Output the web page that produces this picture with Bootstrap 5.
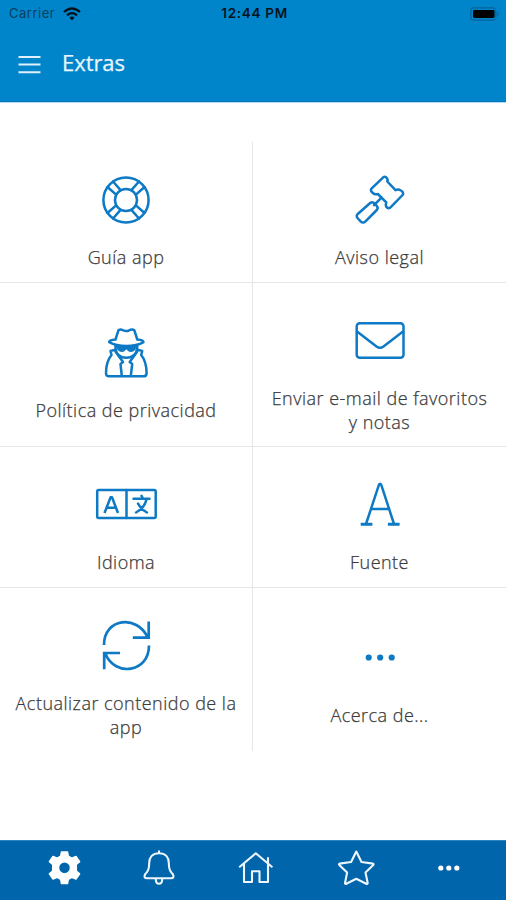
<!DOCTYPE html>
<html lang="es">
<head>
<meta charset="utf-8">
<meta name="viewport" content="width=device-width, initial-scale=1">
<title>Extras</title>
<link href="https://cdn.jsdelivr.net/npm/bootstrap@5.3.0/dist/css/bootstrap.min.css" rel="stylesheet">
<style>
body{font-family:"Open Sans","Noto Sans",sans-serif;height:900px;overflow:hidden;background:#fff}
.topbar{background:#0085ca;height:102px;border-bottom:1px solid #0077bd;box-shadow:0 1px 0 #b9daf2}
.status{height:27px;font-family:Inter,sans-serif;font-size:13px;color:#0a1d2b;padding:0 6px 0 9px}
.status .carrier{color:#0b3f60;letter-spacing:.5px}
.status .clock{font-weight:600;font-size:13.5px;letter-spacing:.7px;color:#04141f}
.heading{height:73px;padding-left:18px;gap:21px}
.heading h1{font-size:22px;color:#e9f5fd;letter-spacing:-.05px;line-height:30px;padding-bottom:3px;-webkit-text-stroke:.25px #e9f5fd}
.tiles{padding-top:40px}
.short-row{height:141px}
.tall-row{height:164px}
.tile{padding:34px 12px 12px;border-bottom:1px solid #e6e6e6;color:#3b3b3b;text-decoration:none}
.tile:first-child{border-right:1px solid #e6e6e6}
.tiles>.row:last-child{height:163px}
.tiles>.row:last-child .tile{border-bottom:0;padding-top:34px}
.tile svg{width:64px;height:48px;overflow:visible;margin-bottom:22px;flex:none}
.tile span{font-size:18px;font-weight:300;line-height:23.5px;letter-spacing:.48px;text-align:center;-webkit-text-stroke:.25px #3b3b3b}
.ico{fill:none;stroke:#0e79c4;stroke-width:2.5;stroke-linejoin:round;stroke-linecap:round}
.tabs{background:#0065aa;height:60px;border-top:1px solid #2d83bd}
.tabs svg{width:506px;height:59px;display:block}
.tabs .line{fill:none;stroke:#eef6fd;stroke-width:2.1;stroke-linejoin:round;stroke-linecap:round}
</style>
<script src="https://cdn.jsdelivr.net/npm/bootstrap@5.3.0/dist/js/bootstrap.bundle.min.js"></script>
</head>
<body class="d-flex flex-column">
<header class="topbar flex-shrink-0">
  <div class="status row g-0 align-items-center">
    <div class="col d-flex align-items-center gap-2"><span class="carrier">Carrier</span>
      <svg width="18" height="14" viewBox="0 0 18 14" fill="none" stroke="#06121b" stroke-width="2.3"><path d="M1 5Q9-2 17 5M4 8.300Q9 4 14 8.300"/><path d="M6.400 10.600Q9 8.300 11.600 10.600L9 13.400Z" fill="#06121b" stroke="none"/></svg>
    </div>
    <div class="col-auto clock">12:44 PM</div>
    <div class="col d-flex justify-content-end">
      <svg width="30" height="14" viewBox="0 0 30 14"><rect x=".8" y=".8" width="25" height="12.4" rx="3.5" fill="none" stroke="#07639a" stroke-width="1.3"/><rect x="3" y="3" width="21.5" height="8" rx="1.4"/><path d="M27.500 4.500Q30 7 27.500 9.500Z" fill="#07639a"/></svg>
    </div>
  </div>
  <div class="heading d-flex align-items-center">
    <svg width="23" height="20" viewBox="0 0 23 20" stroke="#e0f1fc" stroke-width="2"><path d="M.5 3h22M.5 10.500h22M.5 18.200h22"/></svg>
    <h1 class="m-0 fw-normal">Extras</h1>
  </div>
</header>

<main class="tiles flex-grow-1">
  <div class="row g-0 short-row">
    <a class="tile col-6 d-flex flex-column align-items-center justify-content-center">
      <svg class="ico" viewBox="94 176 64 48"><circle cx="126" cy="200" r="22.600"/><circle cx="126" cy="200" r="11"/><path d="M113 181.500l7.400 8.300M107.500 187l8.300 7.400M139 181.500l-7.400 8.300M144.500 187l-8.300 7.400M113 218.500l7.400-8.300M107.500 213l8.300-7.400M139 218.500l-7.400-8.300M144.500 213l-8.300-7.400"/></svg>
      <span>Guía app</span>
    </a>
    <a class="tile col-6 d-flex flex-column align-items-center justify-content-center">
      <svg class="ico" viewBox="348 176 64 48"><path d="M383.2 177.300Q385.300 176 387 178.200Q388 179.500 387.300 181.500L395.500 190.200Q397.500 189.300 399.500 189.800Q404.500 191.800 402.600 195L390.800 207.200Q388.600 209.400 386.200 206.600Q385.300 205 386.300 202.400L377.800 194Q374.800 194.800 372.800 193Q369.800 190.500 371.500 188.600Z"/><path d="M381.500 197.700L374 205.200M370.500 202.800Q372.500 201.500 374.500 203.500L377 206.200Q378.400 208.300 376.800 210L365.500 221.300Q363 223.800 360.600 221.300L357.900 218.500Q355.500 216 358 213.700Z"/></svg>
      <span>Aviso legal</span>
    </a>
  </div>
  <div class="row g-0 tall-row">
    <a class="tile col-6 d-flex flex-column align-items-center justify-content-center">
      <svg class="ico" viewBox="94 328.500 64 48"><path d="M115.500 339L118.500 329.700Q121 328 124 330.200Q126 331 128.500 330.200Q132 328 134.300 329.700L137.300 339M115.500 339Q109 339.500 109.200 341.600Q116 345.500 126.300 345.500Q137 345.500 143.500 341.600Q143.500 339.500 137.300 339"/><path d="M115.500 345v3Q116.500 357.300 126.300 357.300Q136 357.300 137.200 348v-3"/><path fill="#0e79c4" stroke-width="1" d="M117 345.500h18.800v2.500q-1.500 3-5 3-2.800 0-4-2.500h-.9q-1.200 2.500-4 2.500-3.500 0-4.900-3z"/><path d="M114.500 349.500L110.500 350.400L111.500 354.500Q106 361 106 373Q106.200 375.800 109 375.800H143.700Q146.300 375.800 146.600 373Q146.600 361 141.200 354.500L142.200 350.400L138.200 349.500M115.500 351L123 361.500L120.500 363.500L121.800 375.500M137.200 351L129.700 361.500L132.200 363.500L130.800 375.500"/></svg>
      <span>Política de privacidad</span>
    </a>
    <a class="tile col-6 d-flex flex-column align-items-center justify-content-center">
      <svg class="ico" viewBox="348 317 64 48"><rect x="356.700" y="323.200" width="46.800" height="34.500" rx="3"/><path d="M357 331.500L376.500 346.500Q380 349 383.500 346.500L403 331.500"/></svg>
      <span>Enviar e-mail de favoritos<br>y notas</span>
    </a>
  </div>
  <div class="row g-0 short-row">
    <a class="tile col-6 d-flex flex-column align-items-center justify-content-center">
      <svg class="ico" viewBox="94 481 64 48"><rect x="97.200" y="490" width="58.500" height="28" rx="1.500"/><path d="M126.500 490v28M133.500 498.700h16M141.500 495.800l1.500 2.700M146.500 499q-1.500 8.500-10.500 13.500M138 503.500q3 6 9 9"/><path stroke-linecap="butt" d="M104.500 513L110.600 497.200h1.400L118 513M106.500 507.800h9.800"/></svg>
      <span>Idioma</span>
    </a>
    <a class="tile col-6 d-flex flex-column align-items-center justify-content-center">
      <svg class="ico" viewBox="348 481 64 48"><path d="M366 524L379 484.700Q380 482.800 381.200 484.700L394 524M371 509h18.300"/><path stroke-width="3" stroke-linecap="butt" d="M360.700 524.200h11.700M387.900 524.200h11.700"/></svg>
      <span>Fuente</span>
    </a>
  </div>
  <div class="row g-0 tall-row">
    <a class="tile col-6 d-flex flex-column align-items-center justify-content-center">
      <svg class="ico" viewBox="94 621.500 64 48"><g stroke-width="2.700" stroke-linecap="butt" stroke-linejoin="miter"><path d="M104 644.500C104 617.500 137 614 147.500 636.500M148.700 621v16.200H132.800"/><path d="M149 645C149 672.500 115 676.500 105.500 653.500M104.200 668.700v-16.200H120"/></g></svg>
      <span>Actualizar contenido de la<br>app</span>
    </a>
    <a class="tile col-6 d-flex flex-column align-items-center justify-content-center">
      <svg viewBox="348 633.500 64 48" fill="#0e79c4"><circle cx="368.700" cy="657" r="3.100"/><circle cx="380.200" cy="657" r="3.100"/><circle cx="391.700" cy="657" r="3.100"/></svg>
      <span>Acerca de...</span>
    </a>
  </div>
</main>

<nav class="tabs flex-shrink-0">
  <svg viewBox="0 841 506 59">
    <path fill="#fff" fill-rule="evenodd" stroke="#fff" stroke-width="1.500" stroke-linejoin="round" d="M61.500 852h6l.8 4.200 3.400 2 4.300-1.700 3.600 5.200-3.300 2.800v6.500l3.300 2.800-3.600 5.200-4.300-1.700-3.400 2-.8 4.200h-6l-.8-4.200-3.400-2-4.300 1.700-3.600-5.200 3.300-2.800v-6.500l-3.300-2.800 3.600-5.200 4.300 1.700 3.400-2zM64.500 861.700a6 6 0 1 0 0 12 6 6 0 1 0 0-12z"/>
    <path class="line" d="M159 851.300v1.800M159 853.200C152.500 853.200 149.200 857.500 149.200 863C149.200 870 147.500 871.500 145 874.500Q143.300 878.300 147 878.300H171Q174.700 878.300 173 874.500C170.500 871.500 168.800 870 168.800 863C168.800 857.500 165.500 853.200 159 853.200ZM155.800 879.500Q156 883.700 159 883.700Q162 883.700 162.200 879.500"/>
    <path class="line" stroke-linejoin="miter" d="M239.800 866.700L255.800 853.300L271.800 866.700M244 864v18h8V871.200h7.500V882h8.500V858"/>
    <path class="line" d="M356.300 851.500L361.500 862L373 863.600Q374 864 373.300 864.900L365.500 872.600L367.700 883Q367.400 884.300 366.200 883.800L356.300 878.800L346.400 883.800Q345.200 884.300 345 883L347.100 872.600L339.300 864.900Q338.600 864 339.600 863.600L351.100 862Z"/>
    <g fill="#fff"><circle cx="440.800" cy="868" r="2.600"/><circle cx="448.800" cy="868" r="2.600"/><circle cx="456.800" cy="868" r="2.600"/></g>
  </svg>
</nav>
</body>
</html>
